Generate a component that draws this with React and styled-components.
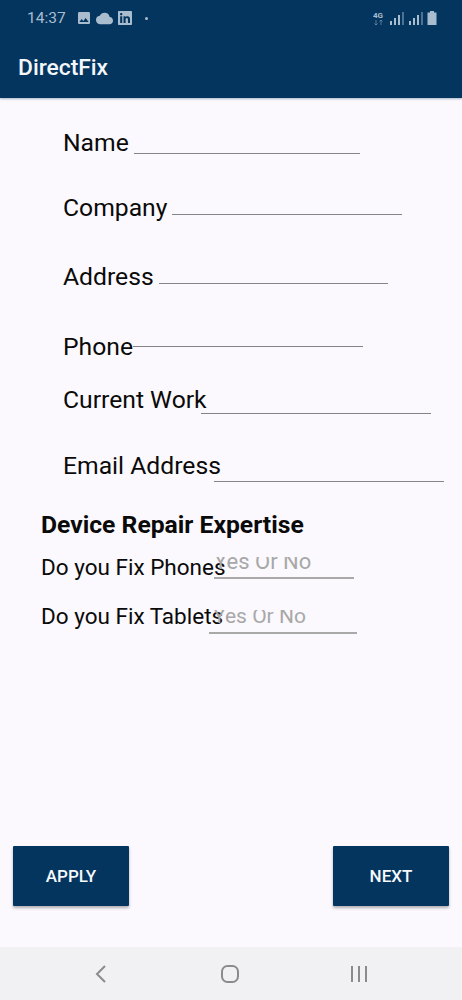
import React from 'react'
import styled, { createGlobalStyle } from 'styled-components'
import { MdImage, MdCloud } from 'react-icons/md'
import { FaLinkedin } from 'react-icons/fa'

const GlobalStyle = createGlobalStyle`
  html, body {
    margin: 0;
    padding: 0;
    background: #fbf9fd;
  }
  * { box-sizing: border-box; }
`

const Page = styled.div`
  width: 462px;
  height: 1000px;
  display: flex;
  flex-direction: column;
  overflow: hidden;
  background: #fbf9fd;
  font-family: Roboto, "Liberation Sans", sans-serif;
  color: #0a0a0a;
`

const Header = styled.header`
  height: 98px;
  flex: none;
  background: #04355f;
  box-shadow: 0 1px 2px rgba(4, 53, 95, 0.35);
`

const StatusBar = styled.div`
  height: 36px;
  padding: 0 27px;
  display: flex;
  align-items: center;
  color: #a9bdcf;
`

const Time = styled.span`
  font-size: 15.5px;
  margin-right: 10px;
`

const StatusIcons = styled.div`
  display: flex;
  align-items: center;
  gap: 4px;
`

const Dot = styled.span`
  width: 3px;
  height: 3px;
  margin-left: 12px;
  border-radius: 50%;
  background: #a9bdcf;
`

const SystemIcons = styled.div`
  margin-left: auto;
  margin-right: -2px;
  display: flex;
  align-items: center;
  gap: 4px;
`

const Title = styled.h1`
  margin: 0;
  padding: 18px 18px 0;
  font-size: 22.8px;
  line-height: 28px;
  font-weight: 500;
  color: #f4f7fa;
`

const Form = styled.main`
  flex: 1;
  padding-top: 30px;
`

const Row = styled.div`
  height: ${p => p.$height}px;
  padding-left: ${p => p.$inset}px;
  display: flex;
  align-items: flex-start;
`

const Label = styled.label`
  flex: none;
  width: ${p => p.$width}px;
  font-size: ${p => p.$size}px;
  line-height: 30px;
  white-space: nowrap;
`

const Field = styled.div`
  flex: none;
  width: ${p => p.$width}px;
  height: ${p => p.$height}px;
  border-bottom: 1px solid #858585;
`

const HintField = styled(Field)`
  margin-top: ${p => p.$top}px;
  overflow: hidden;
  border-bottom: 2px solid #a9a9a9;
`

const Hint = styled.div`
  margin-top: ${p => p.$shift}px;
  padding-left: ${p => p.$indent}px;
  font-size: ${p => p.$size}px;
  line-height: 24px;
  color: #a8a8a8;
  white-space: nowrap;
`

const Section = styled.h2`
  margin: 0;
  height: 42px;
  padding-left: 41px;
  font-size: 24.7px;
  line-height: 30px;
  font-weight: 700;
`

const Actions = styled.div`
  flex: none;
  display: flex;
  justify-content: space-between;
  padding: 0 13px;
  margin-bottom: 41px;
`

const Button = styled.button`
  width: 116px;
  height: 60px;
  border: 0;
  border-radius: 1px;
  background: #04355f;
  box-shadow: 0 2px 3px rgba(0, 0, 0, 0.3);
  color: #f7f9fb;
  font-family: inherit;
  font-size: 17px;
  font-weight: 500;
`

const NavBar = styled.nav`
  flex: none;
  height: 53px;
  background: #f1f0f3;
  display: grid;
  grid-template-columns: repeat(3, 22px);
  justify-content: center;
  align-items: center;
  column-gap: 107px;
  padding-right: 2px;
  color: #8b8b8b;
`

const SignalIcon = () => (
  <svg width="15" height="13" viewBox="0 0 15 13" fill="currentColor">
    <rect x="1" y="9" width="2" height="4" />
    <rect x="5" y="6" width="2" height="7" />
    <rect x="9" y="3" width="2" height="10" />
    <rect x="13" y="0" width="2" height="13" opacity="0.45" />
  </svg>
)

const App = () => (
  <Page>
    <GlobalStyle />
    <Header>
      <StatusBar>
        <Time>14:37</Time>
        <StatusIcons>
          <MdImage size={16} />
          <MdCloud size={17} />
          <FaLinkedin size={16} />
        </StatusIcons>
        <Dot />
        <SystemIcons>
          <svg width="12" height="15" viewBox="0 0 12 15" fill="currentColor">
            <text x="0" y="7" fontSize="8" fontWeight="700" fontFamily="Roboto">4G</text>
            <path d="M3 9v5M1.5 12.5 3 14l1.5-1.5M8 14V9M6.5 10.5 8 9l1.500 1.500" fill="none" stroke="currentColor" strokeWidth="0.8" opacity="0.6" />
          </svg>
          <SignalIcon />
          <SignalIcon />
          <svg width="10" height="14" viewBox="0 0 10 14" fill="currentColor">
            <path d="M3 0h4v1.500h2.500V14H.5V1.500H3z" />
          </svg>
        </SystemIcons>
      </StatusBar>
      <Title>DirectFix</Title>
    </Header>

    <Form>
      <Row $inset={63} $height={65}>
        <Label $size={24.7} $width={71}>Name</Label>
        <Field $width={226} $height={26} />
      </Row>
      <Row $inset={63} $height={69}>
        <Label $size={24.7} $width={109}>Company</Label>
        <Field $width={230} $height={22} />
      </Row>
      <Row $inset={63} $height={70}>
        <Label $size={24.7} $width={96}>Address</Label>
        <Field $width={229} $height={22} />
      </Row>
      <Row $inset={63} $height={53}>
        <Label $size={24.7} $width={70}>Phone</Label>
        <Field $width={230} $height={15} />
      </Row>
      <Row $inset={63} $height={66}>
        <Label $size={24.7} $width={138}>Current Work</Label>
        <Field $width={230} $height={29} />
      </Row>
      <Row $inset={63} $height={59}>
        <Label $size={24.7} $width={151}>Email Address</Label>
        <Field $width={230} $height={31} />
      </Row>
      <Section>Device Repair Expertise</Section>
      <Row $inset={41} $height={49}>
        <Label $size={22.5} $width={173}>Do you Fix Phones</Label>
        <HintField $width={140} $height={22} $top={5}>
          <Hint $indent={0} $size={22} $shift={-7}>Yes Or No</Hint>
        </HintField>
      </Row>
      <Row $inset={41} $height={49}>
        <Label $size={22.5} $width={168}>Do you Fix Tablets</Label>
        <HintField $width={148} $height={24} $top={9}>
          <Hint $indent={4} $size={21} $shift={-6}>Yes Or No</Hint>
        </HintField>
      </Row>
    </Form>

    <Actions>
      <Button>APPLY</Button>
      <Button>NEXT</Button>
    </Actions>

    <NavBar>
      <svg width="22" height="22" viewBox="0 0 22 22" fill="none" stroke="currentColor" strokeWidth="2">
        <path d="M15 3 7 11l8 8" />
      </svg>
      <svg width="22" height="22" viewBox="0 0 22 22" fill="none" stroke="currentColor" strokeWidth="2">
        <rect x="3" y="3" width="16" height="16" rx="5.500" />
      </svg>
      <svg width="22" height="22" viewBox="0 0 22 22" fill="none" stroke="currentColor" strokeWidth="2">
        <path d="M4 3v16M11 3v16M18 3v16" />
      </svg>
    </NavBar>
  </Page>
)

export default App
